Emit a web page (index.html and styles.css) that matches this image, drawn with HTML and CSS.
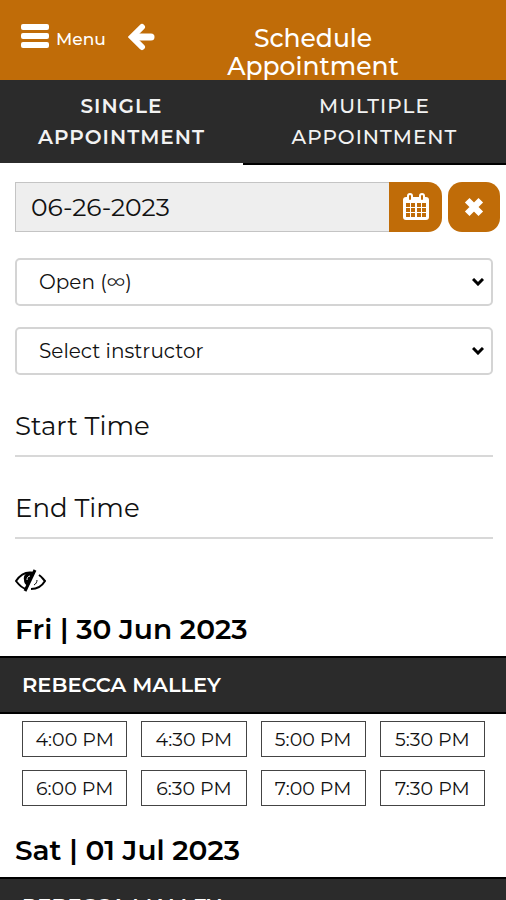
FILE: index.html
```html
<!DOCTYPE html>
<html lang="en">
<head>
<meta charset="utf-8">
<meta name="viewport" content="width=device-width, initial-scale=1">
<title>Schedule Appointment</title>
<link rel="stylesheet" href="styles.css">
</head>
<body>
<div class="app">
  <header class="header">
    <div class="header-nav">
      <button class="menu-button" type="button">
        <svg width="28" height="24" viewBox="0 0 28 24" fill="currentColor" aria-hidden="true"><rect x="0" y="0" width="28" height="6" rx="2"/><rect x="0" y="9" width="28" height="6" rx="2"/><rect x="0" y="18" width="28" height="6" rx="2"/></svg>
        <span class="menu-label">Menu</span>
      </button>
      <a class="back" href="#" aria-label="Back">
        <svg width="28" height="28" viewBox="0 0 28 28" fill="none" stroke="currentColor" stroke-width="6" stroke-linecap="round" aria-hidden="true"><path d="M14 4 4 14l10 10" stroke-linejoin="miter"/><path d="M6 14h17" stroke-width="7"/></svg>
      </a>
    </div>
    <h1 class="title">Schedule Appointment</h1>
  </header>

  <nav class="tabs">
    <a class="tab tab-active" href="#" aria-current="page">SINGLE APPOINTMENT</a>
    <a class="tab" href="#">MULTIPLE APPOINTMENT</a>
  </nav>

  <main class="content">
    <form class="filters">
      <div class="date-row">
        <input class="date-input" type="text" value="06-26-2023" aria-label="Date" readonly>
        <button class="icon-button calendar-button" type="button" aria-label="Choose date">
          <svg width="26" height="28" viewBox="0 0 26 28" aria-hidden="true">
            <rect x="0" y="4" width="26" height="23" rx="3" fill="#fff"/>
            <g fill="#c06c08"><rect x="3" y="10" width="4" height="4"/><rect x="8" y="10" width="4" height="4"/><rect x="14" y="10" width="4" height="4"/><rect x="19" y="10" width="4" height="4"/><rect x="3" y="15" width="4" height="4"/><rect x="8" y="15" width="4" height="4"/><rect x="14" y="15" width="4" height="4"/><rect x="19" y="15" width="4" height="4"/><rect x="3" y="20" width="4" height="4"/><rect x="8" y="20" width="4" height="4"/><rect x="14" y="20" width="4" height="4"/><rect x="19" y="20" width="4" height="4"/></g>
            <g fill="#c06c08" stroke="#fff" stroke-width="2"><rect x="5" y="1" width="4" height="7" rx="2"/><rect x="17" y="1" width="4" height="7" rx="2"/></g>
          </svg>
        </button>
        <button class="icon-button clear-button" type="button" aria-label="Clear date">
          <svg width="20" height="20" viewBox="0 0 20 20" fill="none" stroke="#fff" stroke-width="6.5" stroke-linecap="square" stroke-linejoin="round" aria-hidden="true"><path d="M5.5 5.5l9 9M14.5 5.5l-9 9"/></svg>
        </button>
      </div>
      <div class="select-box">
        <select class="select" aria-label="Availability"><option>Open (∞)</option></select>
        <svg class="chevron" width="12" height="8" viewBox="0 0 12 8" aria-hidden="true"><path d="M1 1l5 5 5-5"/></svg>
      </div>
      <div class="select-box">
        <select class="select" aria-label="Instructor"><option>Select instructor</option></select>
        <svg class="chevron" width="12" height="8" viewBox="0 0 12 8" aria-hidden="true"><path d="M1 1l5 5 5-5"/></svg>
      </div>
      <input class="time-input" type="text" placeholder="Start Time" aria-label="Start Time">
      <input class="time-input" type="text" placeholder="End Time" aria-label="End Time">
      <button class="eye-button" type="button" aria-label="Toggle hidden slots">
        <svg width="31" height="24" viewBox="0 0 31 24" fill="none" stroke="#000" stroke-width="2" aria-hidden="true">
          <path d="M19 4C11 2 5 6 1 12c3 4 6 7 10 8"/>
          <path d="M24 6c3 2 4 4 6 6-3 5-8 8-14 8"/>
          <path d="M18 4c-6-1-9 3-8 7 0 2 1 4 3 5z" fill="#000"/>
          <path d="M20 1 10 22" stroke-width="3"/>
          <path d="M22 11c0 2-1 4-3 5" stroke-width="1"/>
          <path d="M12 11c0-2 1-4 3-4" stroke="#fff" stroke-width="1"/>
        </svg>
      </button>
    </form>

    <section>
      <h2 class="day">Fri | 30 Jun 2023</h2>
      <h3 class="instructor">REBECCA MALLEY</h3>
      <div class="slots">
        <button class="slot" type="button">4:00 PM</button>
        <button class="slot" type="button">4:30 PM</button>
        <button class="slot" type="button">5:00 PM</button>
        <button class="slot" type="button">5:30 PM</button>
        <button class="slot" type="button">6:00 PM</button>
        <button class="slot" type="button">6:30 PM</button>
        <button class="slot" type="button">7:00 PM</button>
        <button class="slot" type="button">7:30 PM</button>
      </div>
    </section>

    <section>
      <h2 class="day">Sat | 01 Jul 2023</h2>
      <h3 class="instructor">REBECCA MALLEY</h3>
    </section>
  </main>
</div>
</body>
</html>
```
FILE: styles.css
```css
* { box-sizing: border-box; }

body {
  margin: 0;
  background: #fff;
  color: #111;
  font-family: Montserrat, Inter, "Open Sans", sans-serif;
}

button, input, select { font-family: inherit; color: inherit; }
button { margin: 0; padding: 0; border: 0; background: none; }
a { color: inherit; text-decoration: none; }
svg { display: block; flex: none; }

.app {
  display: flex;
  flex-direction: column;
  height: 100vh;
  overflow: hidden;
}

.header {
  flex: none;
  display: grid;
  grid-template-columns: 180px 1fr 60px;
  height: 80px;
  background: #c06c08;
  color: #fff;
}

.header-nav {
  display: flex;
  align-items: flex-start;
  gap: 22px;
  padding: 24px 0 0 21px;
}

.menu-button {
  display: flex;
  align-items: flex-start;
  gap: 7px;
  color: #fff;
}

.menu-label { padding-top: 4px; font-size: 17px; font-weight: 500; line-height: 22px; }

.back { margin-top: -1px; }

.title {
  margin: 0;
  padding: 24px 20px 0;
  font-size: 25px;
  font-weight: 500;
  line-height: 28px;
  text-align: center;
}

.tabs {
  flex: none;
  display: grid;
  grid-template-columns: 12fr 13fr;
  background: #2b2b2b;
  color: #f2f2f2;
}

.tab {
  padding: 11px 32px 10px;
  border-bottom: 2px solid #000;
  font-size: 20px;
  font-weight: 500;
  line-height: 31px;
  letter-spacing: 1px;
  text-align: center;
}

.tab-active { border-bottom-color: #fff; font-weight: 600; }

.content {
  flex: 1;
  min-height: 0;
  overflow-y: auto;
  scrollbar-width: none;
}

.filters { padding: 17px 13px 0 15px; }

.date-row { display: flex; height: 50px; margin-right: -7px; }

.date-input {
  flex: 1;
  min-width: 0;
  padding: 0 15px;
  border: 1px solid #c4c4c4;
  border-right: 0;
  border-radius: 0;
  background: #eee;
  font-size: 25px;
}

.icon-button {
  display: flex;
  align-items: center;
  justify-content: center;
  width: 53px;
  background: #c06c08;
}

.calendar-button { border-radius: 0 14px 14px 0; }
.clear-button { width: 52px; margin-left: 6px; border-radius: 14px; }

.select-box { position: relative; margin-top: 21px; }
.date-row + .select-box { margin-top: 26px; }

.select {
  display: block;
  width: 100%;
  height: 48px;
  padding: 0 22px;
  border: 2px solid #d4d4d4;
  border-radius: 5px;
  background: #fff;
  font-size: 20px;
  appearance: none;
}

.chevron {
  position: absolute;
  top: 20px;
  right: 9px;
  fill: none;
  stroke: #000;
  stroke-width: 3;
  pointer-events: none;
}

.time-input {
  display: block;
  width: 100%;
  height: 61px;
  margin-top: 21px;
  padding: 0;
  border: 0;
  border-bottom: 2px solid #d8d8d8;
  background: transparent;
  font-size: 26px;
}

.time-input::placeholder { color: #111; opacity: 1; }

.eye-button { display: block; margin-top: 30px; }

.day {
  margin: 0;
  padding: 20px 15px 11px;
  font-size: 28px;
  font-weight: 600;
  line-height: 32px;
  color: #000;
}

.instructor {
  margin: 0;
  padding: 13px 22px;
  border: solid #000;
  border-width: 2px 0;
  background: #2b2b2b;
  color: #fff;
  font-size: 21px;
  font-weight: 600;
  line-height: 28px;
}

.slots {
  display: grid;
  grid-template-columns: repeat(4, 1fr);
  gap: 13px 14px;
  padding: 7px 21px 8px 22px;
}

.slot {
  height: 36px;
  border: 1px solid #444;
  background: #fff;
  font-size: 19px;
}
```
